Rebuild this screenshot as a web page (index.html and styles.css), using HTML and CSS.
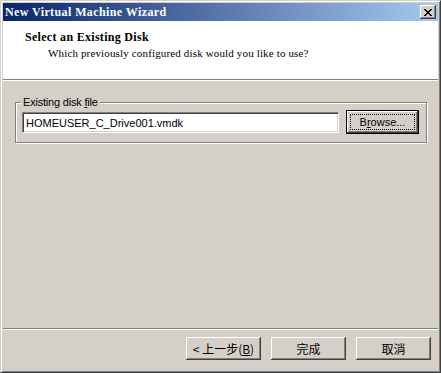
FILE: index.html
```html
<!DOCTYPE html>
<html lang="en">
<head>
    <meta charset="UTF-8">
    <title>New Virtual Machine Wizard</title>
    <link rel="stylesheet" href="styles.css">
</head>
<body>
    <div class="window">
        <div class="titlebar">
            <span class="title">New Virtual Machine Wizard</span>
            <button class="close" aria-label="Close">
                <svg width="8" height="7" viewBox="0 0 8 7">
                    <path d="M0 0h2v1h1v1h2v-1h1v-1h2v1h-1v1h-1v1h-1v1h1v1h1v1h1v1h-2v-1h-1v-1h-2v1h-1v1h-2v-1h1v-1h1v-1h1v-1h-1v-1h-1v-1h-1z" fill="#000"/>
                </svg>
            </button>
        </div>
        <div class="header">
            <h1>Select an Existing Disk</h1>
            <p>Which previously configured disk would you like to use?</p>
        </div>
        <div class="body">
            <fieldset class="group">
                <legend>Existing disk <u>f</u>ile</legend>
                <div class="row">
                    <input class="field" type="text" value="HOMEUSER_C_Drive001.vmdk">
                    <button class="btn default"><span class="focus">B<u>r</u>owse...</span></button>
                </div>
            </fieldset>
        </div>
        <div class="footer">
            <button class="btn">&lt; 上一步(<u>B</u>)</button>
            <button class="btn">完成</button>
            <button class="btn">取消</button>
        </div>
    </div>
</body>
</html>
```

FILE: styles.css
```css
html, body {
    margin: 0;
    padding: 0;
    background-color: #d4d0c8;
}
.window {
    width: 441px;
    height: 373px;
    box-sizing: border-box;
    display: flex;
    flex-direction: column;
    background-color: #d4d0c8;
    border-top: 1px solid #d4d0c8;
    border-left: 1px solid #d4d0c8;
    border-right: 1px solid #404040;
    border-bottom: 1px solid #404040;
    box-shadow: inset 1px 1px 0 #fff, inset -1px -1px 0 #808080;
    padding: 2px;
}
.titlebar {
    height: 18px;
    flex: none;
    display: flex;
    align-items: center;
    justify-content: space-between;
    padding: 0 2px 0 2px;
    background: linear-gradient(to right, #0a246a, #a6caf0);
}
.title {
    font-family: "Liberation Serif", serif;
    font-weight: bold;
    font-size: 12px;
    color: #fff;
    letter-spacing: 0.4px;
}
.close {
    width: 16px;
    height: 14px;
    padding: 0;
    display: flex;
    align-items: center;
    justify-content: center;
    background-color: #d4d0c8;
    border: none;
    box-shadow: inset -1px -1px 0 #404040, inset 1px 1px 0 #fff, inset -2px -2px 0 #808080;
}
.header {
    flex: none;
    height: 58px;
    background-color: #fff;
    border-bottom: 1px solid #808080;
    box-shadow: 0 1px 0 #fff;
    padding: 0 0 0 22px;
    font-family: "Liberation Serif", serif;
    color: #000;
}
.header h1 {
    margin: 9px 0 0 0;
    font-size: 12px;
    font-weight: bold;
    line-height: 15px;
    letter-spacing: 0.3px;
}
.header p {
    margin: 1px 0 0 23px;
    font-size: 11px;
    line-height: 15px;
    letter-spacing: 0.15px;
}
.body {
    flex: 1;
    padding: 16px 11px 0 12px;
}
.group {
    margin: 0;
    padding: 1px 7px 8px 6px;
    border: 1px solid #808080;
    box-shadow: inset 1px 1px 0 #fff, 1px 1px 0 #fff;
    font-family: "Liberation Sans", Arial, sans-serif;
    font-size: 11px;
}
.group legend {
    margin-left: -1px;
    padding: 0 2px 0 2px;
    background-color: #d4d0c8;
    line-height: 13px;
    letter-spacing: -0.2px;
}
.row {
    display: flex;
    align-items: center;
    gap: 7px;
}
.field {
    flex: 1;
    height: 21px;
    box-sizing: border-box;
    margin: 0;
    padding: 1px 3px 0 3px;
    font-family: "Liberation Sans", Arial, sans-serif;
    font-size: 11px;
    color: #000;
    background-color: #fff;
    border: 1px solid;
    border-color: #808080 #fff #fff #808080;
    box-shadow: inset 1px 1px 0 #404040, inset -1px -1px 0 #d4d0c8;
    outline: none;
}
.btn {
    width: 75px;
    height: 23px;
    box-sizing: border-box;
    margin: 0;
    padding: 0;
    font-family: "Liberation Sans", "Noto Sans CJK TC", sans-serif;
    font-size: 12px;
    color: #000;
    background-color: #d4d0c8;
    border: none;
    box-shadow: inset -1px -1px 0 #404040, inset 1px 1px 0 #fff, inset -2px -2px 0 #808080;
}
.btn.default {
    width: 73px;
    height: 24px;
    font-size: 11px;
    border: 1px solid #000;
    display: flex;
    padding: 3px;
}
.focus {
    flex: 1;
    display: flex;
    align-items: center;
    justify-content: center;
    border: 1px dotted #000;
}
.footer {
    flex: none;
    height: 42px;
    display: flex;
    justify-content: flex-end;
    align-items: flex-start;
    gap: 10px;
    padding: 8px 7px 0 0;
    box-sizing: border-box;
    border-top: 1px solid #808080;
    box-shadow: inset 0 1px 0 #fff;
}
.footer .btn {
    font-family: "Noto Sans CJK TC", sans-serif;
}
```
